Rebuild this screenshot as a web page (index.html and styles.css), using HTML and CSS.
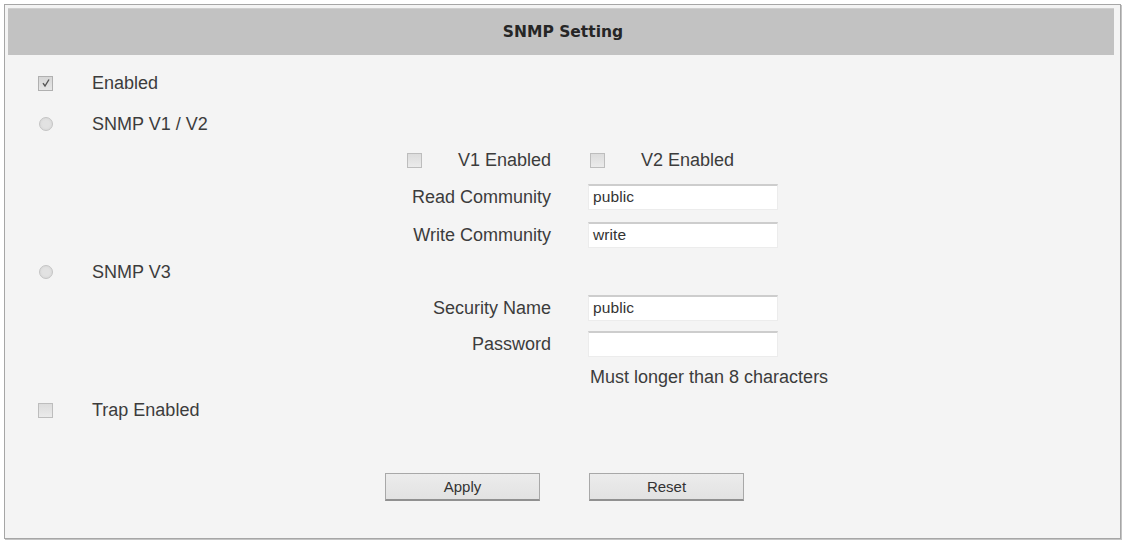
FILE: index.html
```html
<!DOCTYPE html>
<html>
<head>
<meta charset="utf-8">
<link rel="stylesheet" href="styles.css">
</head>
<body>
<div class="page">
  <div class="panel">
    <div class="header">SNMP Setting</div>
    <div class="content">
      <div class="row opt h40">
        <span class="mark"><span class="cb checked"><svg viewBox="0 0 12 12" width="12" height="12"><path d="M3 6.2 L5 9 L9 2.5" fill="none" stroke="#555" stroke-width="1.4"/></svg></span></span>
        <span class="text">Enabled</span>
      </div>
      <div class="row opt h42">
        <span class="mark"><span class="rd"></span></span>
        <span class="text">SNMP V1 / V2</span>
      </div>
      <div class="row sub h30">
        <span class="lbl split"><span class="cb"></span><span class="text">V1 Enabled</span></span>
        <span class="field pair"><span class="cb"></span><span class="text">V2 Enabled</span></span>
      </div>
      <div class="row sub h44">
        <span class="lbl text">Read Community</span>
        <span class="field"><span class="inp">public</span></span>
      </div>
      <div class="row sub h32">
        <span class="lbl text">Write Community</span>
        <span class="field"><span class="inp">write</span></span>
      </div>
      <div class="row opt h42">
        <span class="mark"><span class="rd"></span></span>
        <span class="text">SNMP V3</span>
      </div>
      <div class="row sub h30">
        <span class="lbl text">Security Name</span>
        <span class="field"><span class="inp">public</span></span>
      </div>
      <div class="row sub h42">
        <span class="lbl text">Password</span>
        <span class="field"><span class="inp"></span></span>
      </div>
      <div class="row sub h24">
        <span class="lbl"></span>
        <span class="field text hint">Must longer than 8 characters</span>
      </div>
      <div class="row opt h42">
        <span class="mark"><span class="cb"></span></span>
        <span class="text">Trap Enabled</span>
      </div>
      <div class="buttons">
        <span class="btn">Apply</span>
        <span class="btn">Reset</span>
      </div>
    </div>
  </div>
</div>
</body>
</html>
```

FILE: styles.css
```css
html, body {
  margin: 0;
  padding: 0;
  background: #ffffff;
}
.page {
  padding: 4px;
}
.panel {
  width: 1115px;
  height: 533px;
  border: 1px solid #a6a6a6;
  box-shadow: 1px 1px 0 #c4c4c4;
  background: #f4f4f4;
  font-family: "Liberation Sans", Arial, sans-serif;
  color: #3c3c3c;
  box-sizing: content-box;
}
.header {
  margin: 3px 6px 0 3px;
  height: 47px;
  background: #c2c2c2;
  border-top: 1px solid #cfcfcf;
  box-sizing: border-box;
  display: flex;
  align-items: center;
  justify-content: center;
  font-family: "DejaVu Sans", Verdana, sans-serif;
  font-weight: bold;
  font-size: 15.5px;
  color: #262626;
  padding-left: 4px;
}
.content {
  padding-top: 8px;
  display: flex;
  flex-direction: column;
}
.row {
  display: flex;
  align-items: center;
}
.h24 { height: 24px; }
.h30 { height: 30px; }
.h32 { height: 32px; }
.h40 { height: 40px; }
.h42 { height: 42px; }
.h44 { height: 44px; }
.text {
  font-size: 18px;
  line-height: 1;
  white-space: nowrap;
}
.opt {
  padding-left: 33px;
}
.mark {
  width: 54px;
  display: flex;
  align-items: center;
}
.cb {
  width: 13px;
  height: 13px;
  border: 1px solid #bdbdbd;
  background: linear-gradient(#dcdcdc, #ebebeb);
  display: inline-flex;
  align-items: center;
  justify-content: center;
  box-sizing: content-box;
}
.cb.checked {
  background: linear-gradient(#d6d6d6, #e6e6e6);
  border-color: #b0b0b0;
}
.rd {
  width: 12px;
  height: 12px;
  border-radius: 50%;
  border: 1px solid #c4c4c4;
  background: radial-gradient(circle at 50% 50%, #e2e2e2 40%, #d4d4d4 100%);
  margin-left: 1px;
}
.sub {
  padding-left: 370px;
}
.lbl {
  width: 176px;
  text-align: right;
  flex: none;
  box-sizing: border-box;
}
.lbl.split {
  display: flex;
  justify-content: space-between;
  align-items: center;
  padding-left: 32px;
}
.field {
  margin-left: 37px;
  display: flex;
  align-items: center;
}
.hint {
  margin-left: 39px;
}
.pair .cb {
  margin-left: 2px;
  margin-right: 36px;
}
.inp {
  width: 190px;
  height: 26px;
  box-sizing: border-box;
  background: #ffffff;
  border: 1px solid #ececec;
  border-top: 2px solid #cdcdcd;
  font-size: 15.5px;
  line-height: 22px;
  padding-left: 4px;
  color: #333;
  letter-spacing: 0.1px;
}
.buttons {
  display: flex;
  gap: 49px;
  padding-left: 380px;
  margin-top: 42px;
}
.btn {
  width: 155px;
  height: 28px;
  box-sizing: border-box;
  border: 1px solid #a8a8a8;
  border-bottom: 2px solid #909090;
  background: linear-gradient(#ececec, #e2e2e2);
  display: flex;
  align-items: center;
  justify-content: center;
  font-size: 15px;
  color: #333;
}
```
